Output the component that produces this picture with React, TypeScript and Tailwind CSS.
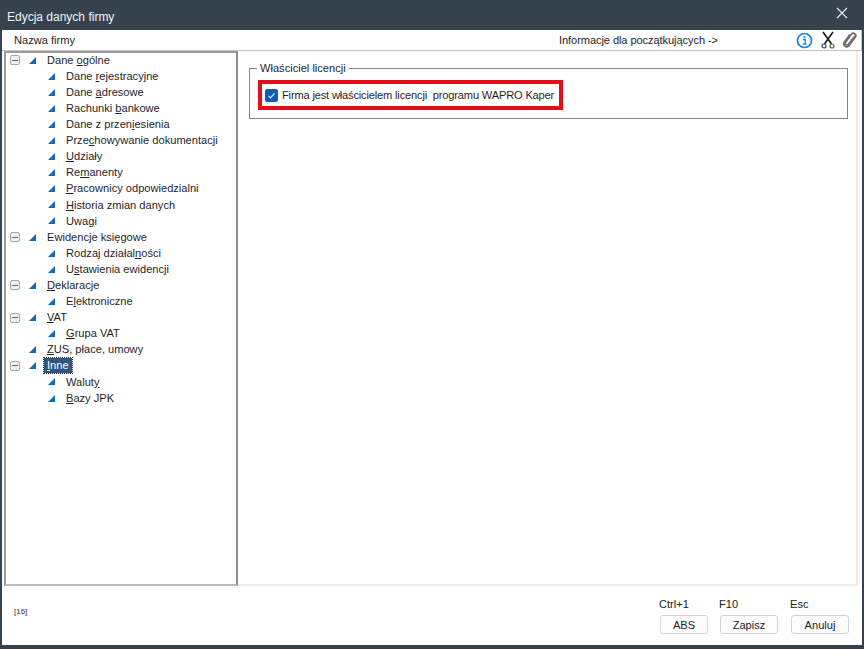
import React from 'react';

interface TreeNode {
  // label is split so that the mnemonic letter gets underlined
  pre: string;
  key?: string;
  post?: string;
  level: 0 | 1;
  expander?: boolean;
  selected?: boolean;
}

const nodes: TreeNode[] = [
  { pre: 'Dane ', key: 'o', post: 'gólne', level: 0, expander: true },
  { pre: 'Dane ', key: 'r', post: 'ejestracyjne', level: 1 },
  { pre: 'Dane ', key: 'a', post: 'dresowe', level: 1 },
  { pre: 'Rachunki ', key: 'b', post: 'ankowe', level: 1 },
  { pre: 'Dane z przen', key: 'i', post: 'esienia', level: 1 },
  { pre: 'Prze', key: 'c', post: 'howywanie dokumentacji', level: 1 },
  { pre: '', key: 'U', post: 'działy', level: 1 },
  { pre: 'Re', key: 'm', post: 'anenty', level: 1 },
  { pre: '', key: 'P', post: 'racownicy odpowiedzialni', level: 1 },
  { pre: '', key: 'H', post: 'istoria zmian danych', level: 1 },
  { pre: 'Uwa', key: 'g', post: 'i', level: 1 },
  { pre: 'Ewidencje księgowe', level: 0, expander: true },
  { pre: 'Rodzaj działal', key: 'n', post: 'ości', level: 1 },
  { pre: 'U', key: 's', post: 'tawienia ewidencji', level: 1 },
  { pre: '', key: 'D', post: 'eklaracje', level: 0, expander: true },
  { pre: 'E', key: 'l', post: 'ektroniczne', level: 1 },
  { pre: '', key: 'V', post: 'AT', level: 0, expander: true },
  { pre: '', key: 'G', post: 'rupa VAT', level: 1 },
  { pre: '', key: 'Z', post: 'US, płace, umowy', level: 0 },
  { pre: '', key: 'I', post: 'nne', level: 0, expander: true, selected: true },
  { pre: 'Walut', key: 'y', level: 1 },
  { pre: '', key: 'B', post: 'azy JPK', level: 1 },
];

function Triangle() {
  return (
    <svg width="7" height="7" viewBox="0 0 7 7" className="shrink-0">
      <path d="M7 0V7H0Z" fill="#0f6cbd" />
    </svg>
  );
}

function Expander() {
  return (
    <span className="w-[10px] h-[10px] border border-[#a8a8a8] rounded-[2px] bg-[#f0f0f0] flex items-center justify-center shrink-0">
      <span className="w-[6px] h-px bg-[#666]" />
    </span>
  );
}

function TreeRow({ node }: { node: TreeNode }) {
  const label = (
    <>
      {node.pre}
      {node.key && <u className="underline-offset-1">{node.key}</u>}
      {node.post}
    </>
  );
  return (
    <div className="h-[16.1px] flex items-center">
      <span className="w-[19px] pl-[4px] flex items-center shrink-0">{node.expander && <Expander />}</span>
      {node.level === 1 ? (
        <span className="ml-[23px] w-[18px] flex shrink-0">
          <Triangle />
        </span>
      ) : (
        <span className="ml-[4px] w-[18px] flex shrink-0">
          <Triangle />
        </span>
      )}
      {node.selected ? (
        <span className="ml-[-3px] px-[3px] h-[15px] leading-[15px] bg-[#2f5582] text-white outline-1 outline-dotted outline-[#222]">{label}</span>
      ) : (
        <span className="whitespace-pre">{label}</span>
      )}
    </div>
  );
}

function ToolIcons() {
  return (
    <div className="flex items-center">
      <svg width="17" height="17" viewBox="0 0 17 17">
        <circle cx="8.5" cy="8.5" r="7" fill="#fff" stroke="#1b87d6" strokeWidth="1.7" />
        <circle cx="8.5" cy="5" r="1.1" fill="#1b87d6" />
        <path d="M7 7.5h2.2v4.2M6.8 12h3.6" fill="none" stroke="#1b87d6" strokeWidth="1.3" />
      </svg>
      <svg width="14" height="18" viewBox="0 0 14 18" className="ml-[8px]">
        <path d="M2 1l8.5 12M12 1L3.5 13" stroke="#1a1a1a" strokeWidth="1.6" fill="none" />
        <circle cx="3" cy="15" r="2" fill="none" stroke="#27408b" strokeWidth="1.2" />
        <circle cx="11" cy="15" r="2" fill="none" stroke="#5a6b2a" strokeWidth="1.2" />
      </svg>
      <svg width="16" height="18" viewBox="0 0 16 18" className="ml-[7px]">
        <path
          d="M12.5 5.5L6.3 13.6c-1 1.3-3.9-.6-2.9-2.2L9.6 3c1.5-2 5.4.4 3.9 2.8L7 14.8c-2 2.6-6.8-.3-4.8-3.5L7.5 4"
          fill="none"
          stroke="#6f6f6f"
          strokeWidth="1.7"
          strokeLinecap="round"
        />
      </svg>
    </div>
  );
}

function FooterButton({ hint, label, width }: { hint: string; label: string; width: string }) {
  return (
    <div className={`flex flex-col ${width}`}>
      <span className="ml-[-1px] h-[18px] leading-[14px] text-[#222]">{hint}</span>
      <button className="h-[19px] leading-[16px] border border-[#d4d4d4] rounded-[3px] bg-[#fdfdfd] text-[#222]">{label}</button>
    </div>
  );
}

export default function App() {
  return (
    <div
      className="w-[864px] h-[649px] bg-[#36434f] flex flex-col overflow-hidden text-[11.1px] text-[#1f1f1f]"
      style={{ fontFamily: '"Liberation Sans", Arial, sans-serif' }}
    >
      {/* title bar */}
      <div className="h-[30px] flex items-center justify-between pl-[7px] pr-[16px] shrink-0">
        <span className="text-[#f2f2f2] text-[12px] mt-[4px]">Edycja danych firmy</span>
        <svg width="12" height="12" viewBox="0 0 12 12" className="mb-[4px]">
          <path d="M1 1l10 10M11 1L1 11" stroke="#e4e7ea" strokeWidth="1.2" />
        </svg>
      </div>

      <div className="flex-1 mx-[2px] mb-[4px] bg-white flex flex-col min-h-0">
        {/* toolbar */}
        <div className="h-[21px] flex items-center shrink-0 pl-[12px] pr-[3px] border-b border-[#c4c4c4] border-r">
          <span>Nazwa firmy</span>
          <span className="ml-auto mr-[78px] tracking-[-0.09px]">Informacje dla początkujących -&gt;</span>
          <ToolIcons />
        </div>

        <div className="h-[535px] flex shrink-0 pl-[2px] pr-[4px]">
          {/* tree */}
          <div className="w-[234px] border-2 border-[#bdbdbd] border-t-[#9c9c9c] border-l-[#9c9c9c] shrink-0 border-r-[#8d8d8d]">
            <div className="-mt-px">
              {nodes.map((node, i) => (
                <TreeRow key={i} node={node} />
              ))}
            </div>
          </div>

          {/* content */}
          <div className="flex-1 border-b-2 border-r-2 border-[#ececec] pl-[11px] pr-[8px] pt-[10px]">
            <fieldset className="h-[58px] border border-[#7f8790] px-[5px] pt-[5px]">
              <legend className="ml-[2px] px-[3px] leading-[14px]">Właściciel licencji</legend>
              <div className="w-[305px] h-[30px] ml-[3px] border-4 border-[#e30d1c] flex items-center pl-[3px]">
                <span className="w-[13px] h-[13px] rounded-[2px] bg-[#0f5cb5] flex items-center justify-center shrink-0">
                  <svg width="9" height="9" viewBox="0 0 9 9">
                    <path d="M1.5 4.8l2 2 4-4.5" fill="none" stroke="#dfeaf7" strokeWidth="1.2" />
                  </svg>
                </span>
                <span className="ml-[4px] whitespace-pre tracking-[-0.17px]">Firma jest właścicielem licencji  programu WAPRO Kaper</span>
              </div>
            </fieldset>
          </div>
        </div>

        {/* footer */}
        <div className="flex-1 flex items-start pl-[12px] pr-[13px] pt-[11px]">
          <span className="text-[8px] mt-[9px] text-[#333]">[16]</span>
          <div className="ml-auto flex">
            <FooterButton hint="Ctrl+1" label="ABS" width="w-[48px] mr-[12px]" />
            <FooterButton hint="F10" label="Zapisz" width="w-[58px] mr-[13px]" />
            <FooterButton hint="Esc" label="Anuluj" width="w-[58px]" />
          </div>
        </div>
      </div>
    </div>
  );
}
